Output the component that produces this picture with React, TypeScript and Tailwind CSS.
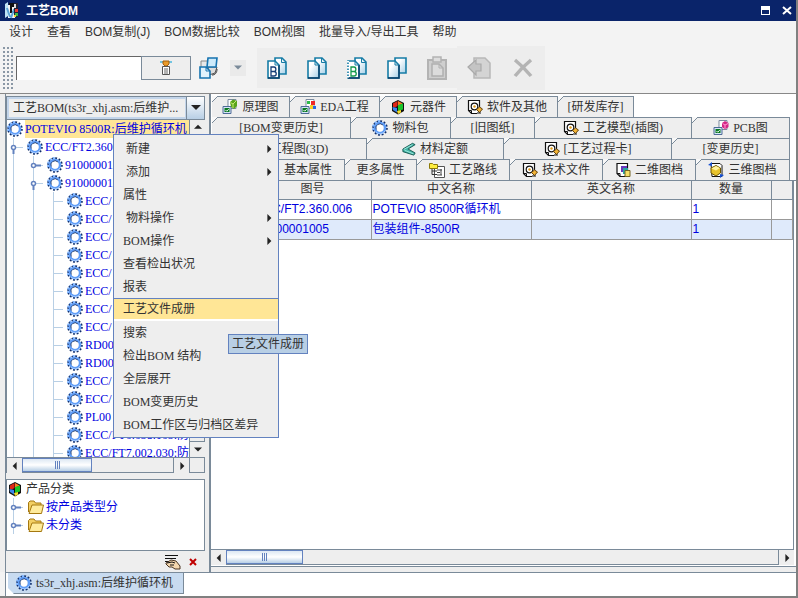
import { FC, ReactNode } from "react";

const SANS = "font-['Liberation_Sans','Noto_Sans_CJK_SC',sans-serif]";
const SERIF = "font-['Liberation_Serif','Noto_Sans_CJK_SC',serif]";

interface IconProps {
  children: ReactNode;
  className?: string;
}

const Icon: FC<IconProps> = ({ children, className = "h-4 w-4" }) => (
  <svg viewBox="0 0 16 16" className={`shrink-0 ${className}`} fill="none" aria-hidden="true">
    {children}
  </svg>
);

const GearIcon: FC = () => (
  <Icon>
    <circle cx="8" cy="8" r="6.9" stroke="#12306b" strokeWidth="1.8" strokeDasharray="1.9 1.71" />
    <path d="M1.2 10A7 7 0 0 1 8.500 1" stroke="#7db4ff" strokeWidth="2" strokeDasharray="1.9 1.7" />
    <circle cx="8" cy="8" r="5" stroke="#5f9df7" strokeWidth="2.6" />
    <path d="M4.300 9.500A4 4 0 0 1 11 5.300" stroke="#22355c" strokeWidth="1" />
    <path d="M4 12A5.600 5.600 0 0 0 13 11" stroke="#a5cbff" strokeWidth="1" />
    <circle cx="8" cy="8" r="3.400" fill="#fff" />
  </Icon>
);

const FolderIcon: FC = () => (
  <Icon className="h-4 w-[18px]">
    <path d="M0.500 13V3.500L2 2h4l1.500 2H13v3" fill="#f3cf63" stroke="#a57810" />
    <path d="M1 14.500h12.500L15.500 6H4L1 14.500z" fill="#ffeb9c" stroke="#a57810" />
  </Icon>
);

const CubesIcon: FC = () => (
  <Icon>
    <path d="M8 1l6 3v8l-6 3.500L2 12V4z" fill="#111" />
    <path d="M3 4.500L7.500 2v5L5 8.500 3 8z" fill="#e02618" />
    <path d="M8 2l4.500 2.500L8 7z" fill="#ff7c20" />
    <path d="M8 6l5-1.500v6L8 12z" fill="#18c62a" />
    <path d="M2.500 8L7 9v4.500L3 11z" fill="#3b86ee" />
    <path d="M7 12l4-1v2.500L8 15z" fill="#f6dc2c" />
  </Icon>
);

const Screen: FC = () => (
  <>
    <path d="M6 .5h8v9H6z" fill="#fff" stroke="#7c8ba0" />
    <path d="M1 7.500h8v7H1z" fill="#d6e4f7" stroke="#4c6b96" />
    <path d="M2.500 9h5v4h-5z" fill="#087a21" />
    <path d="M3.500 11l1.200 1.200 2-2" stroke="#fff" />
  </>
);

const SchematicIcon: FC = () => (
  <Icon>
    <Screen />
    <path d="M8 3l3-2.500L15 2v5l-3 3-3-2z" fill="#58a51b" />
    <path d="M8.500 3.500L11 5v4M11 5l3-3" stroke="#c5e873" />
  </Icon>
);

const EdaIcon: FC = () => (
  <Icon>
    <Screen />
    <path d="M7 2h3v3H7z" fill="#2dbb48" />
    <path d="M11 2h4v4h-4z" fill="#ef2525" />
    <path d="M10 6h3v4h-3z" fill="#f7ce26" />
    <path d="M13 7h3v3h-3z" fill="#2868df" />
  </Icon>
);

const PcbIcon: FC = () => (
  <Icon>
    <Screen />
    <path d="M9 3l3-2 3.500 2v4L12 9.500 9 7z" fill="#d42687" />
    <path d="M9.500 3.500L12 5l3-1.500M12 5v4" stroke="#ff9bd0" />
  </Icon>
);

const DocGearIcon: FC = () => (
  <Icon>
    <path d="M12.500 8V1.500h-11v10l3 3H10" fill="#fff" stroke="#111" strokeWidth="1.200" />
    <path d="M1.500 11.500h3v3" stroke="#111" />
    <circle cx="7.500" cy="7.500" r="3.300" stroke="#111" strokeWidth="1.200" />
    <circle cx="7.500" cy="7.500" r="1.200" fill="#e09a18" />
    <path d="M9.500 10.500l3-2.500 3 2-3 3.500z" fill="#f2b437" stroke="#64410a" />
    <path d="M10 14h4" stroke="#111" />
  </Icon>
);

const QuotaIcon: FC = () => (
  <Icon className="h-4 w-3.5">
    <path d="M1 8L12 1.500l3 1.500-8 5 8 4.500-1.500 2.500L1 11z" fill="#43b3a4" stroke="#11524c" />
    <path d="M2 8.500L12 3M3 9.500l10 4" stroke="#a7ece2" />
  </Icon>
);

const RouteIcon: FC = () => (
  <Icon>
    <path d="M5.500 4.500h10v11h-10z" fill="#fff" stroke="#555" />
    <path d="M0.500 1.500h3l1 1h4v4h-8z" fill="#ffee3d" stroke="#8c7a0a" />
    <path d="M3 7v5.500h5M3 9h5" stroke="#333" />
    <path d="M8 8h5M8 10.500h3M8 13h5M12 7v6" stroke="#444" />
  </Icon>
);

const TwoDIcon: FC = () => (
  <Icon>
    <path d="M2 1.500h10.500v9L10 14.500H5l-3-3z" fill="#fff" stroke="#111" strokeWidth="1.200" />
    <path d="M2 11.500h3v3" stroke="#111" />
    <path d="M6 4h6v6H6z" fill="#6737bd" />
    <path d="M8 6h5v6H8z" fill="#2ba6a0" />
    <path d="M10 8.500h5v6h-5z" fill="#f5df67" stroke="#736323" />
  </Icon>
);

const ThreeDIcon: FC = () => (
  <Icon>
    <path d="M3 1.500h9l2 2v11H4z" fill="#fff" stroke="#111" />
    <path d="M3 6l5-2.500L12.500 6v5L8 14l-5-3z" fill="#e8c32c" stroke="#6e5600" />
    <path d="M3.500 6.500L8 8.500 12 6 8 4z" fill="#fff2a0" />
    <path d="M0 3l4-3v4zM16 13l-4 3v-4z" fill="#164fd1" />
  </Icon>
);

const HandIcon: FC = () => (
  <svg viewBox="0 0 17 16" className="h-4 w-[17px]" fill="none" aria-hidden="true">
    <path d="M1 1.500h13M1 4.500h11M1 7.500h4" stroke="#111" />
    <path d="M2 9l5-3 5 1 4 5v3h-5l-3-2H5L2 10z" fill="#f4d7ae" stroke="#4a3522" />
    <path d="M3 9l5-1 3 1M6 11h4" stroke="#111" />
  </svg>
);

/* Two overlapping sheets, optionally with a letter on the front one */
const SheetsIcon: FC<{ letter?: "blue" | "green"; square?: boolean }> = ({ letter, square }) => (
  <svg viewBox="0 0 20 22" className="h-[22px] w-5" fill="none" aria-hidden="true">
    <defs>
      <linearGradient id="sheet" x1="0" y1="0" x2="1" y2="1">
        <stop offset="0.300" stopColor="#fff" />
        <stop offset="1" stopColor="#a6cfe6" />
      </linearGradient>
    </defs>
    <path
      d={square ? "M8 1h11v15H8z" : "M8 1h7l4 4v12H8z"}
      fill="url(#sheet)"
      stroke="#167ca6"
      strokeWidth="1.600"
    />
    {!square && <path d="M14.500 1v4.500H19" stroke="#167ca6" />}
    <path d="M1 4h7l4 4v13H1z" fill={letter ? "#fff" : "url(#sheet)"} stroke="#167ca6" strokeWidth="1.600" />
    <path d="M1 21h11V8" stroke="#0a3d66" strokeWidth="1.400" />
    <path d="M8 4v4h4" stroke="#167ca6" />
    {letter === "green" && <path d="M1 4v17" stroke="#fff" strokeWidth="2" strokeDasharray="1.500 1.500" />}
    {letter && (
      <path
        d="M4 10v9h3c3 0 3-4.500 0-4.500H4 7c2.500 0 2.500-4.500 0-4.500z"
        stroke={letter === "green" ? "#149a4c" : "#173e76"}
        strokeWidth="1.300"
      />
    )}
  </svg>
);

const WindowsIcon: FC = () => (
  <svg viewBox="0 0 20 22" className="h-[22px] w-5" fill="none" aria-hidden="true">
    <path d="M2 4h7v7H2z" fill="#e8e8e8" stroke="#888" />
    <path d="M9 10h9l-2 6-6 2z" fill="#ddd" stroke="#555" />
    <path d="M9 1h9l-1 9H8z" fill="#cdeafa" stroke="#1673b0" strokeWidth="1.600" />
    <path d="M1 10h6l4 4v7H1z" fill="#e1f2fc" stroke="#1673b0" strokeWidth="1.600" />
    <path d="M7 10v4h4" stroke="#1673b0" />
    <path d="M18 12c0 4-2 6-5 6" stroke="#333" />
  </svg>
);

const PasteIcon: FC = () => (
  <svg viewBox="0 0 20 24" className="h-6 w-5" fill="none" aria-hidden="true">
    <path d="M1 4h18v19H1z" fill="#cfcfcf" stroke="#b3b3b3" strokeWidth="2" />
    <path d="M6 1h8v5H6z" fill="#ddd" stroke="#b3b3b3" strokeWidth="1.500" />
    <path d="M5 8h7l4 4v8H5z" fill="#dcdcdc" stroke="#b0b0b0" strokeWidth="1.500" />
    <path d="M12 8v4h4" stroke="#b0b0b0" />
  </svg>
);

const BackIcon: FC = () => (
  <svg viewBox="0 0 24 24" className="h-6 w-6" fill="none" aria-hidden="true">
    <path d="M7 2h11l5 5v15H7z" fill="#d4d4d4" stroke="#b8b8b8" strokeWidth="1.500" />
    <path d="M1 11l8-7v4h5v7H9v4z" fill="#c4c4c4" stroke="#aaa" strokeWidth="1.200" />
  </svg>
);

const CrossIcon: FC = () => (
  <svg viewBox="0 0 20 20" className="h-5 w-5" fill="none" aria-hidden="true">
    <path d="M2 2c5 4 11 10 16 16M18 2C12 7 6 13 2 18" stroke="#b4b4b4" strokeWidth="3.500" />
  </svg>
);

const AppIcon: FC = () => (
  <svg viewBox="0 0 16 17" className="h-[17px] w-4" fill="none" aria-hidden="true">
    <path d="M1 2l3-2v14l-3 2z" fill="#bfe3f5" />
    <path d="M4 3h7v13H4z" fill="#f4f4f4" />
    <path d="M5 2h5v2H7v6h3" stroke="#111" strokeWidth="2" />
    <path d="M3 6l3 9M10 7l-3 9" stroke="#5ca4d8" strokeWidth="2" />
    <path d="M10 1h4v14h-4z" fill="#223" />
    <path d="M10 2h2v4h-2z" fill="#ddd" />
    <path d="M11 7h3v3h-3z" fill="#e8392c" />
    <path d="M11 11h3v3h-3z" fill="#37b94c" />
    <path d="M10 13h2v2h-2z" fill="#f1d435" />
  </svg>
);

const FilterIcon: FC = () => (
  <Icon>
    <path d="M2 2h12" stroke="#49b6dc" strokeWidth="1.500" />
    <path d="M5 1h6v3l-2 2H7L5 4z" fill="#e99b2b" stroke="#a4600c" />
    <path d="M4.500 6.500h7v8h-7z" fill="#fff" stroke="#555" />
    <path d="M6 9h4M6 11h4M6 13h4" stroke="#666" />
  </Icon>
);

const arrows = {
  up: "M0 6l5-5 5 5z",
  down: "M0 2l5 5 5-5z",
  left: "M7 0L2 5l5 5z",
  right: "M3 0l5 5-5 5z",
};

const Arrow: FC<{ dir: keyof typeof arrows; className?: string }> = ({
  dir,
  className = "h-2 w-2 text-[#222]",
}) => (
  <svg viewBox="0 0 10 10" className={`shrink-0 ${className}`} aria-hidden="true">
    <path d={arrows[dir]} fill="currentColor" />
  </svg>
);

const ScrollButton: FC<{ dir: keyof typeof arrows }> = ({ dir }) => (
  <button
    aria-label={`scroll ${dir}`}
    className="flex h-[15px] w-[15px] shrink-0 items-center justify-center bg-[#eee]"
  >
    <Arrow dir={dir} />
  </button>
);

const HorizontalScroll: FC<{ thumb: string }> = ({ thumb }) => (
  <div className="flex h-4 min-w-0 flex-1 border-y border-[#7a8a99] bg-[#eee]">
    <ScrollButton dir="left" />
    <div
      className={`flex items-center justify-center gap-px border border-[#6382bf] bg-linear-to-b from-[#dde8f3] via-white to-[#b8cfe5] ${thumb}`}
    >
      <i className="h-2 w-px bg-[#6382bf]" />
      <i className="h-2 w-px bg-[#6382bf]" />
      <i className="h-2 w-px bg-[#6382bf]" />
    </div>
    <div className="flex-1 border-r border-[#7a8a99]" />
    <ScrollButton dir="right" />
  </div>
);

interface TreeNode {
  label: string;
  level: number;
  state?: "open" | "closed";
}

const treeNodes: TreeNode[] = [
  { label: "POTEVIO 8500R:后维护循环机", level: 0 },
  { label: "ECC/FT2.360.006", level: 1, state: "open" },
  { label: "91000001005", level: 2, state: "closed" },
  { label: "91000001006", level: 2, state: "open" },
  { label: "ECC/", level: 3 },
  { label: "ECC/", level: 3 },
  { label: "ECC/", level: 3 },
  { label: "ECC/", level: 3 },
  { label: "ECC/", level: 3 },
  { label: "ECC/", level: 3 },
  { label: "ECC/", level: 3 },
  { label: "ECC/", level: 3 },
  { label: "RD00", level: 3 },
  { label: "RD00", level: 3 },
  { label: "ECC/", level: 3 },
  { label: "ECC/", level: 3 },
  { label: "PL00", level: 3 },
  { label: "ECC/FT6.638.165:防", level: 3 },
  { label: "ECC/FT7.002.030:防", level: 3 },
];

const Guide: FC<{ kind: "line" | "leaf" | "open" | "closed" }> = ({ kind }) => (
  <svg viewBox="0 0 20 18" className="h-[18px] w-5 shrink-0" fill="none" aria-hidden="true">
    <path d="M6.500 0v18" stroke="#b8cfe5" />
    {kind !== "line" && <path d="M6 9.500h10" stroke="#b8cfe5" />}
    {kind === "closed" && <path d="M8 9.500h6" stroke="#6382bf" strokeWidth="2" />}
    {kind === "open" && <path d="M6.500 11v5" stroke="#6382bf" strokeWidth="2" />}
    {(kind === "open" || kind === "closed") && (
      <circle cx="6.500" cy="9.500" r="2" fill="#fff" stroke="#6382bf" strokeWidth="1.500" />
    )}
  </svg>
);

const TreeRow: FC<{ node: TreeNode }> = ({ node }) => (
  <li className="flex h-[18px] items-center whitespace-nowrap text-[#0000e0]">
    {Array.from({ length: node.level }, (_, i) => (
      <Guide key={i} kind={i < node.level - 1 ? "line" : (node.state ?? "leaf")} />
    ))}
    <GearIcon />
    <span className={`ml-0.5 h-[18px] leading-[18px] ${node.level === 0 ? "flex-1 bg-[#ffe696]" : ""}`}>
      {node.label}
    </span>
  </li>
);

interface TabItem {
  label: string;
  width: string;
  icon?: ReactNode;
}

const tabRows: TabItem[][] = [
  [
    { label: "原理图", width: "w-[78px]", icon: <SchematicIcon /> },
    { label: "EDA工程", width: "w-[90px]", icon: <EdaIcon /> },
    { label: "元器件", width: "w-[77px]", icon: <CubesIcon /> },
    { label: "软件及其他", width: "w-[101px]", icon: <DocGearIcon /> },
    { label: "[研发库存]", width: "w-[76px]" },
  ],
  [
    { label: "[BOM变更历史]", width: "w-[139px]" },
    { label: "物料包", width: "w-[100px]", icon: <GearIcon /> },
    { label: "[旧图纸]", width: "w-[84px]" },
    { label: "工艺模型(插图)", width: "w-[157px]", icon: <DocGearIcon /> },
    { label: "PCB图", width: "flex-1", icon: <PcbIcon /> },
  ],
  [
    { label: "工程图(3D)", width: "w-[155px]", icon: <ThreeDIcon /> },
    { label: "材料定额", width: "w-[137px]", icon: <QuotaIcon /> },
    { label: "[工艺过程卡]", width: "w-[168px]", icon: <DocGearIcon /> },
    { label: "[变更历史]", width: "flex-1" },
  ],
  [
    { label: "", width: "w-[60px]" },
    { label: "基本属性", width: "w-[73px]" },
    { label: "更多属性", width: "w-[72px]" },
    { label: "工艺路线", width: "w-[93px]", icon: <RouteIcon /> },
    { label: "技术文件", width: "w-[93px]", icon: <DocGearIcon /> },
    { label: "二维图档", width: "w-[93px]", icon: <TwoDIcon /> },
    { label: "三维图档", width: "flex-1", icon: <ThreeDIcon /> },
  ],
];

const Tab: FC<{ tab: TabItem }> = ({ tab }) => (
  <button
    role="tab"
    className={`relative flex h-[21px] items-center justify-center gap-1 whitespace-nowrap border-t border-r border-[#7a8a99] bg-[#eee] ${tab.width}`}
  >
    <svg viewBox="0 0 6 6" className="absolute -top-px left-0 h-1.5 w-1.5" aria-hidden="true">
      <path d="M0 0h6L0 6z" fill="#f8f8f8" />
      <path d="M0 6l6-6" stroke="#7a8a99" />
    </svg>
    {tab.icon}
    {tab.label}
  </button>
);

const menus = ["设计", "查看", "BOM复制(J)", "BOM数据比较", "BOM视图", "批量导入/导出工具", "帮助"];

const popupItems: { label: string; sub?: boolean; indent?: boolean; active?: boolean }[] = [
  { label: "新建", sub: true, indent: true },
  { label: "添加", sub: true, indent: true },
  { label: "属性" },
  { label: "物料操作", sub: true, indent: true },
  { label: "BOM操作", sub: true },
  { label: "查看检出状况" },
  { label: "报表" },
  { label: "工艺文件成册", active: true },
  { label: "搜索" },
  { label: "检出BOM 结构" },
  { label: "全层展开" },
  { label: "BOM变更历史" },
  { label: "BOM工作区与归档区差异" },
];

const parts = [
  ["", "ECC/FT2.360.006", "POTEVIO 8500R循环机", "", "1", ""],
  ["", "91000001005", "包装组件-8500R", "", "1", ""],
];

const TitleBar: FC = () => (
  <header className={`flex h-[21px] shrink-0 items-center bg-[#0a246a] pr-1 pl-1 text-white ${SANS}`}>
    <AppIcon />
    <h1 className="ml-1.5 flex-1 text-xs font-bold">工艺BOM</h1>
    <button aria-label="restore" className="mr-3 h-[9px] w-[9px] border border-t-4 border-white" />
    <button aria-label="close" className="h-[9px] w-[10px]">
      <svg viewBox="0 0 10 9" className="h-[9px] w-[10px]" aria-hidden="true">
        <path d="M1 1l8 7M9 1L1 8" stroke="#fff" strokeWidth="2" />
      </svg>
    </button>
  </header>
);

const Toolbar: FC = () => (
  <div className="flex h-[51px] shrink-0 items-center border-b border-[#888] pl-0.5">
    <div className="h-11 w-[11px] bg-[radial-gradient(#8a97a5_25%,transparent_30%)] bg-size-[4px_4px]" />
    <input
      aria-label="搜索"
      className="ml-[3px] h-6 w-[125px] border-t border-l border-[#666] bg-white px-1 outline-none"
    />
    <button
      aria-label="过滤"
      className="flex h-6 w-[50px] items-center justify-center border border-[#7a8a99] bg-[#eee]"
    >
      <FilterIcon />
    </button>
    <button aria-label="窗口" className="ml-2">
      <WindowsIcon />
    </button>
    <button aria-label="更多" className="ml-[11px] flex h-4 w-4 items-center justify-center bg-[#eaeaea]">
      <Arrow dir="down" className="h-2 w-2 text-[#7a8a99]" />
    </button>
    <div className="ml-[11px] flex h-10 items-center bg-[#ededed]">
      <button aria-label="复制BOM" className="flex w-10 justify-center"><SheetsIcon letter="blue" /></button>
      <button aria-label="复制" className="flex w-10 justify-center"><SheetsIcon /></button>
      <button aria-label="复制结构" className="flex w-10 justify-center"><SheetsIcon letter="green" /></button>
      <button aria-label="复制图档" className="flex w-10 justify-center"><SheetsIcon square /></button>
      <button aria-label="粘贴" className="flex w-10 justify-center"><PasteIcon /></button>
    </div>
    <div className="flex h-11 items-center bg-[#ededed]">
      <button aria-label="撤回" className="flex w-11 justify-center"><BackIcon /></button>
      <button aria-label="删除" className="flex w-11 justify-center"><CrossIcon /></button>
    </div>
  </div>
);

const Sidebar: FC = () => (
  <aside className="flex w-[200px] shrink-0 flex-col border-l border-[#7a8a99] pt-0.5">
    <div className="flex h-6 shrink-0 border border-[#7a8a99] bg-[#eee]">
      <select
        aria-label="BOM"
        className="min-w-0 flex-1 appearance-none border-2 border-r border-[#c3d5ea] bg-[#eee] pl-1 text-[#333] outline-none"
      >
        <option>工艺BOM(ts3r_xhj.asm:后维护...</option>
      </select>
      <span className="flex w-[18px] items-center justify-center border-l border-[#7a8a99] bg-linear-to-b from-white to-[#b8cfe5]">
        <Arrow dir="down" className="h-2.5 w-2.5 text-[#222]" />
      </span>
    </div>

    <div className="flex min-h-0 flex-1 border-l border-[#7a8a99] bg-white">
      <ul className="min-w-0 flex-1 overflow-hidden">
        {treeNodes.map((node, i) => (
          <TreeRow key={i} node={node} />
        ))}
      </ul>
      <div className="flex w-4 shrink-0 flex-col border-x border-[#7a8a99] bg-[#eee]">
        <ScrollButton dir="up" />
        <div className="flex-1 border-y border-[#7a8a99]" />
        <ScrollButton dir="down" />
      </div>
    </div>
    <div className="flex shrink-0 border-l border-[#7a8a99]">
      <HorizontalScroll thumb="w-[70px]" />
      <div className="w-4 border border-[#7a8a99]" />
    </div>

    <ul className="mt-1.5 h-[72px] shrink-0 border border-[#7a8a99] bg-white">
      <li className="flex h-[18px] items-center gap-[3px]">
        <CubesIcon />
        产品分类
      </li>
      {["按产品类型分", "未分类"].map((name) => (
        <li key={name} className="flex h-[18px] items-center text-[#0000e0]">
          <Guide kind="closed" />
          <FolderIcon />
          <span className="ml-px">{name}</span>
        </li>
      ))}
    </ul>
    <div className="flex h-[21px] shrink-0 items-center justify-end gap-2 pr-2">
      <button aria-label="编辑"><HandIcon /></button>
      <button aria-label="删除">
        <svg viewBox="0 0 8 8" className="h-2 w-2" aria-hidden="true">
          <path d="M1 1l6 6M7 1L1 7" stroke="#c00000" strokeWidth="2" />
        </svg>
      </button>
    </div>
  </aside>
);

const DetailPanel: FC = () => (
  <main className="flex min-w-0 flex-1 flex-col border-l-2 border-[#7a8a99] bg-white pt-0.5">
    <div className="border-b border-[#7a8a99] pr-1.5 pl-px">
      {tabRows.map((row, i) => (
        <div key={i} role="tablist" className="flex">
          {row.map((tab, j) => (
            <Tab key={j} tab={tab} />
          ))}
        </div>
      ))}
    </div>
    <div className="mr-0.5 min-h-0 flex-1 overflow-hidden border-r border-[#7a8a99]">
      <table className={`w-full table-fixed border-collapse ${SANS}`}>
        <colgroup>
          <col className="w-[43px]" />
          <col className="w-[117px]" />
          <col className="w-40" />
          <col className="w-40" />
          <col className="w-20" />
          <col />
        </colgroup>
        <thead>
          <tr className="h-[18px] bg-[#eee]">
            {["", "图号", "中文名称", "英文名称", "数量", ""].map((name, i) => (
              <th key={i} className="border-r border-b border-[#7a8a99] p-0 font-normal leading-[17px]">
                {name}
              </th>
            ))}
          </tr>
        </thead>
        <tbody>
          {parts.map((row, i) => (
            <tr key={i} className={i === 1 ? "h-5 bg-[#dfeafb]" : "h-5"}>
              {row.map((cell, j) => (
                <td
                  key={j}
                  className="border-r border-b border-[#999] py-0 pr-0 pl-px leading-[19px] whitespace-nowrap text-[#0000e0]"
                >
                  {cell}
                </td>
              ))}
            </tr>
          ))}
        </tbody>
      </table>
    </div>
    <div className="mr-0.5 mb-px flex">
      <HorizontalScroll thumb="w-[77px]" />
    </div>
    <div className="h-1.5 shrink-0 border-t border-[#7a8a99] bg-[#eee]" />
  </main>
);

const PopupMenu: FC = () => (
  <ul
    role="menu"
    className="absolute top-[134px] left-[113px] w-[166px] border border-[#6382bf] bg-[#eee] pt-0.5 pb-px"
  >
    {popupItems.map((item) => (
      <li key={item.label} role="none">
        <button
          role="menuitem"
          className={`flex h-[23px] w-full items-center justify-between pr-[5px] ${
            item.indent ? "pl-3" : "pl-[9px]"
          } ${item.active ? "border-t border-b-2 border-t-[#6382bf] border-b-white bg-[#ffe696]" : ""}`}
        >
          {item.label}
          {item.sub && <Arrow dir="right" className="h-2 w-2 text-[#222]" />}
        </button>
      </li>
    ))}
  </ul>
);

const App: FC = () => (
  <div
    className={`relative flex h-screen flex-col overflow-hidden border-r-2 border-b-2 border-[#808080] bg-[#f3f3f3] text-xs text-[#333] ${SERIF}`}
  >
    <TitleBar />
    <nav className={`flex h-[22px] shrink-0 items-center gap-[14px] pl-[9px] ${SANS}`}>
      {menus.map((name) => (
        <button key={name} className="whitespace-nowrap">
          {name}
        </button>
      ))}
    </nav>
    <Toolbar />

    <div className="flex min-h-0 flex-1 gap-1 bg-[#eee] pl-[5px]">
      <Sidebar />
      <DetailPanel />
    </div>
    <footer className="ml-[5px] h-6 shrink-0 border-t border-l border-[#7a8a99] bg-white pl-0.5">
      <button className="flex h-[21px] w-44 items-center gap-1 border-r border-b border-[#7a8a99] bg-[#c8dbf0] pl-2 [clip-path:polygon(0_0,100%_0,100%_100%,6px_100%,0_15px)]">
        <GearIcon />
        ts3r_xhj.asm:后维护循环机
      </button>
    </footer>

    <PopupMenu />
    <div
      role="tooltip"
      className="absolute top-[334px] left-[228px] flex h-5 items-center border border-[#6382bf] bg-[#b8cfe5] px-[3px]"
    >
      工艺文件成册
    </div>
  </div>
);

export default App;
